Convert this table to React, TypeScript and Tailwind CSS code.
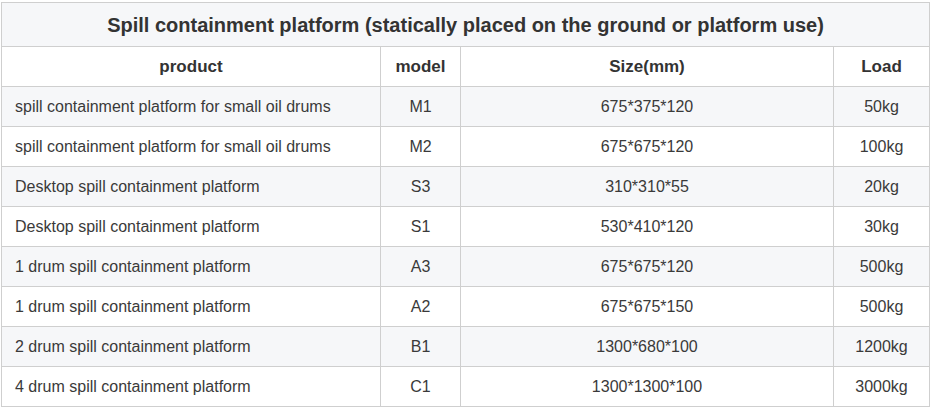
const rows = [
  { product: "spill containment platform for small oil drums", model: "M1", size: "675*375*120", load: "50kg" },
  { product: "spill containment platform for small oil drums", model: "M2", size: "675*675*120", load: "100kg" },
  { product: "Desktop spill containment platform", model: "S3", size: "310*310*55", load: "20kg" },
  { product: "Desktop spill containment platform", model: "S1", size: "530*410*120", load: "30kg" },
  { product: "1 drum spill containment platform", model: "A3", size: "675*675*120", load: "500kg" },
  { product: "1 drum spill containment platform", model: "A2", size: "675*675*150", load: "500kg" },
  { product: "2 drum spill containment platform", model: "B1", size: "1300*680*100", load: "1200kg" },
  { product: "4 drum spill containment platform", model: "C1", size: "1300*1300*100", load: "3000kg" },
];

export default function App() {
  return (
    <div className="w-[934px] h-[412px] bg-white pl-[1px] pt-[2px] font-['Liberation_Sans',Arial,sans-serif] text-[#333]">
      <table className="w-[928px] table-fixed border-collapse">
        <colgroup>
          <col className="w-[379px]" />
          <col className="w-[80px]" />
          <col className="w-[373px]" />
          <col className="w-[96px]" />
        </colgroup>
        <thead>
          <tr className="h-[44px] bg-[#f6f7f9]">
            <th colSpan={4} className="border border-[#cfcfcf] text-[20px] font-bold text-center">
              Spill containment platform (statically placed on the ground or platform use)
            </th>
          </tr>
          <tr className="h-[40px] bg-white">
            <th className="border border-[#cfcfcf] text-[17px] font-bold text-center">product</th>
            <th className="border border-[#cfcfcf] text-[17px] font-bold text-center">model</th>
            <th className="border border-[#cfcfcf] text-[17px] font-bold text-center">Size(mm)</th>
            <th className="border border-[#cfcfcf] text-[17px] font-bold text-center">Load</th>
          </tr>
        </thead>
        <tbody>
          {rows.map((r, i) => (
            <tr key={i} className={`h-[40px] ${i % 2 === 0 ? "bg-[#f6f7f9]" : "bg-white"}`}>
              <td className="border border-[#cfcfcf] pl-[13px] text-[16px] text-[#3a3a3a]">{r.product}</td>
              <td className="border border-[#cfcfcf] text-center text-[16px] text-[#3a3a3a]">{r.model}</td>
              <td className="border border-[#cfcfcf] text-center text-[16px] text-[#3a3a3a]">{r.size}</td>
              <td className="border border-[#cfcfcf] text-center text-[16px] text-[#3a3a3a]">{r.load}</td>
            </tr>
          ))}
        </tbody>
      </table>
    </div>
  );
}
